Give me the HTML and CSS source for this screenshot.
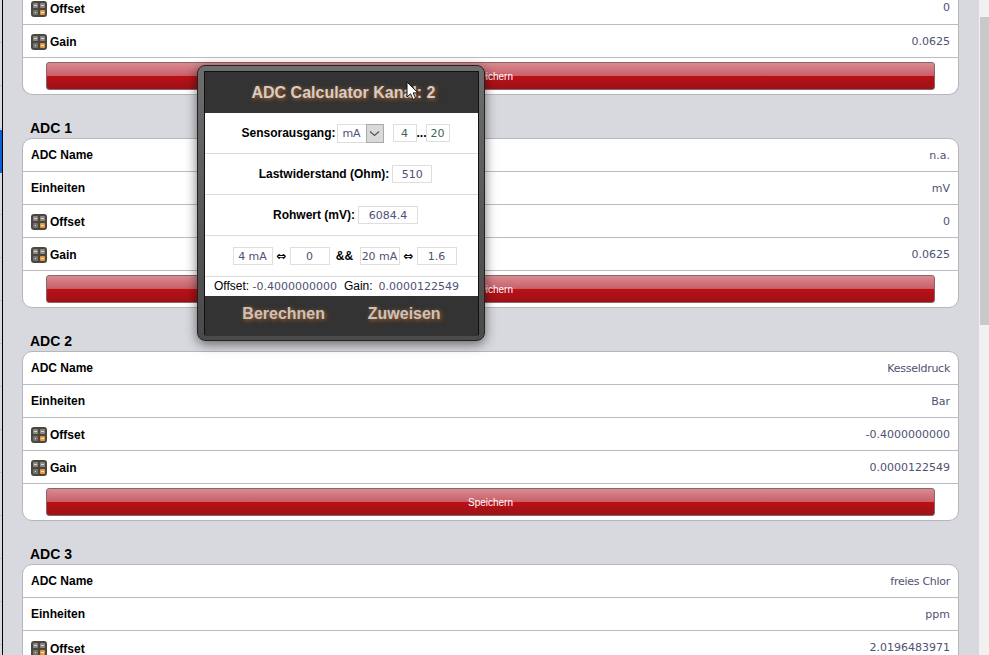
FILE: index.html
```html
<!DOCTYPE html>
<html lang="de">
<head>
    <meta charset="UTF-8">
    <title>ADC Einstellungen</title>
    <link rel="stylesheet" href="styles.css">
</head>
<body>
    <svg class="defs" width="0" height="0">
        <symbol id="calc" viewBox="0 0 16 16">
            <rect x="0" y="0" width="16" height="16" rx="3" fill="#4a4640"/>
            <rect x="2" y="2" width="5" height="5" rx="1" fill="#8c8984"/>
            <rect x="9" y="2" width="5" height="5" rx="1" fill="#8c8984"/>
            <rect x="2" y="9" width="5" height="5" rx="1" fill="#77746f"/>
            <rect x="9" y="9" width="5" height="5" rx="1" fill="#e8993a"/>
            <rect x="3" y="4" width="3" height="1" fill="#d8d6d2"/>
            <rect x="10" y="4" width="3" height="1" fill="#d8d6d2"/>
            <rect x="4" y="11" width="1" height="1" fill="#e4e2de"/>
            <rect x="10" y="11" width="3" height="1" fill="#fbe3bd"/>
        </symbol>
    </svg>

    <div class="side">
        <div class="side-tab"></div>
    </div>

    <div class="page">
        <!-- ADC 0 ist nach oben weggescrollt -->
        <section class="adc-cut">
            <div class="card card-cut">
                <div class="row row-cut"><span class="name name-ico"><svg class="ico"><use href="#calc"/></svg>Offset</span><span class="val">0</span></div>
                <div class="row"><span class="name name-ico"><svg class="ico"><use href="#calc"/></svg>Gain</span><span class="val">0.0625</span></div>
                <div class="btn-row"><button type="button" class="save">Speichern</button></div>
            </div>
        </section>

        <section class="adc">
            <h3>ADC 1</h3>
            <div class="card">
                <div class="row"><span class="name">ADC Name</span><span class="val">n.a.</span></div>
                <div class="row"><span class="name">Einheiten</span><span class="val">mV</span></div>
                <div class="row"><span class="name name-ico"><svg class="ico"><use href="#calc"/></svg>Offset</span><span class="val">0</span></div>
                <div class="row"><span class="name name-ico"><svg class="ico"><use href="#calc"/></svg>Gain</span><span class="val">0.0625</span></div>
                <div class="btn-row"><button type="button" class="save">Speichern</button></div>
            </div>
        </section>

        <section class="adc">
            <h3>ADC 2</h3>
            <div class="card">
                <div class="row"><span class="name">ADC Name</span><span class="val val-txt">Kesseldruck</span></div>
                <div class="row"><span class="name">Einheiten</span><span class="val">Bar</span></div>
                <div class="row"><span class="name name-ico"><svg class="ico"><use href="#calc"/></svg>Offset</span><span class="val">-0.4000000000</span></div>
                <div class="row"><span class="name name-ico"><svg class="ico"><use href="#calc"/></svg>Gain</span><span class="val">0.0000122549</span></div>
                <div class="btn-row"><button type="button" class="save">Speichern</button></div>
            </div>
        </section>

        <section class="adc">
            <h3>ADC 3</h3>
            <div class="card">
                <div class="row"><span class="name">ADC Name</span><span class="val val-txt">freies Chlor</span></div>
                <div class="row"><span class="name">Einheiten</span><span class="val">ppm</span></div>
                <div class="row"><span class="name name-ico"><svg class="ico"><use href="#calc"/></svg>Offset</span><span class="val">2.0196483971</span></div>
            </div>
        </section>
    </div>

    <div class="scrollbar">
        <div class="thumb"></div>
    </div>

    <!-- Popup -->
    <div class="popup">
        <div class="popup-inner">
            <div class="popup-head">ADC Calculator Kanal: 2</div>
            <div class="popup-line line-label line-sensor">
                <label>Sensorausgang:</label>
                <span class="sel"><span class="sel-text">mA</span><span class="sel-arrow"><svg width="11" height="7" viewBox="0 0 11 7"><path d="M1 1.5 5.5 5.5 10 1.5" fill="none" stroke="#555" stroke-width="1.2"/></svg></span></span>
                <input class="fld fld-s green" value="4"><b class="dots">...</b><input class="fld fld-s green" value="20">
            </div>
            <div class="popup-line line-label">
                <label>Lastwiderstand (Ohm):</label>
                <input class="fld fld-m" value="510">
            </div>
            <div class="popup-line line-label">
                <label>Rohwert (mV):</label>
                <input class="fld fld-l" value="6084.4">
            </div>
            <div class="popup-line">
                <input class="fld fld-m" value="4 mA"><b class="sym">&#8660;</b><input class="fld fld-m" value="0"><b class="amp">&amp;&amp;</b><input class="fld fld-m" value="20 mA"><b class="sym">&#8660;</b><input class="fld fld-m" value="1.6">
            </div>
            <div class="popup-result">Offset: <span class="res">-0.4000000000</span><span class="gain">Gain:</span><span class="res">0.0000122549</span></div>
            <div class="popup-foot">
                <span class="act">Berechnen</span>
                <span class="act">Zuweisen</span>
            </div>
        </div>
    </div>

    <svg class="cursor" width="14" height="21" viewBox="0 0 14 21">
        <path d="M1 1V16L4.6 12.8 7 18.5 9.6 17.4 7.2 11.9H12Z" fill="#fff" stroke="#111" stroke-width="1"/>
    </svg>
</body>
</html>
```

FILE: styles.css
```css
* {
    box-sizing: border-box;
}
html, body {
    height: 100%;
}
body {
    margin: 0;
    display: flex;
    overflow: hidden;
    font-family: "Liberation Sans", Arial, sans-serif;
    font-size: 12px;
    color: #000;
    background-color: #d8d9de;
}
.defs {
    position: absolute;
}

.side {
    flex: 0 0 3px;
    background: repeating-linear-gradient(to bottom, #d8d9de 0, #d8d9de 42px, #c2c2c8 42px, #c2c2c8 43px);
    border-right: 1px solid #000;
    padding-top: 130px;
}
.side-tab {
    height: 43px;
    background-color: #0a62d8;
}

.page {
    flex: 1;
    overflow: hidden;
    padding: 0 20px 0 19px;
}
.adc-cut {
    height: 105px;
}
.adc {
    height: 213px;
    padding-top: 15px;
}
.adc h3 {
    margin: 0 0 2px;
    padding-left: 8px;
    height: 16px;
    font-size: 14px;
    line-height: 16px;
    font-weight: bold;
}
.card {
    background-color: #fff;
    border: 1px solid #b6b6bc;
    border-radius: 10px;
}
.card-cut {
    border-top: none;
    border-top-left-radius: 0;
    border-top-right-radius: 0;
}
.row {
    display: flex;
    align-items: center;
    justify-content: space-between;
    height: 33px;
    padding: 0 8px;
    border-bottom: 1px solid #bcbcc0;
}
.row-cut {
    height: 25px;
    padding-bottom: 9px;
}
.card > .row:last-child {
    border-bottom: none;
}
.name {
    display: flex;
    align-items: center;
    font-weight: bold;
}
.name-ico {
    padding-top: 2px;
}
.ico {
    width: 16px;
    height: 16px;
    margin-right: 3px;
}
.val {
    color: #4f5272;
    font-family: "DejaVu Sans", sans-serif;
    font-size: 11px;
}
.val-txt {
    letter-spacing: -0.27px;
}
.btn-row {
    padding: 4px 23px;
    height: 36px;
}
.save {
    display: block;
    width: 100%;
    height: 28px;
    padding: 0;
    border: 1px solid #8b6468;
    border-radius: 3px;
    color: #fff;
    font-family: "Liberation Sans", Arial, sans-serif;
    font-size: 10px;
    background: linear-gradient(to bottom, #d98b91 0%, #c8606a 48%, #bd1016 50%, #ae1117 70%, #9c1216 100%);
}

.scrollbar {
    flex: 0 0 10px;
    background-color: #f1f1f1;
    padding-top: 17px;
}
.thumb {
    height: 308px;
    margin-left: 1px;
    background-color: #c9c9c9;
}

.popup {
    position: absolute;
    left: 197px;
    top: 65px;
    width: 288px;
    height: 276px;
    padding: 5px 5px 5px 6px;
    border: 1px solid #222;
    border-radius: 8px;
    background: linear-gradient(to bottom, #6e6e6e, #555 60%, #4a4a4a);
    box-shadow: 0 3px 12px rgba(0, 0, 0, 0.55);
}
.popup-inner {
    height: 100%;
    display: flex;
    flex-direction: column;
    border: 1px solid #111;
    background-color: #fff;
}
.popup-head {
    flex: 0 0 41px;
    display: flex;
    align-items: center;
    justify-content: center;
    padding-left: 4px;
    background-color: #333;
    color: #cfcfcf;
    font-size: 16px;
    font-weight: bold;
    text-shadow: 1px 1px 4px #c8661a;
}
.popup-line {
    flex: 0 0 41px;
    display: flex;
    align-items: center;
    justify-content: center;
    padding-left: 6px;
    border-bottom: 1px solid #dcdcdc;
}
.line-label {
    padding-left: 8px;
}
.popup-line label {
    font-weight: bold;
    margin-right: 3px;
}
.line-sensor label {
    margin-right: 1px;
}
.fld {
    height: 18px;
    padding: 0;
    border: 1px solid #dedede;
    background-color: #fff;
    color: #4f5272;
    font-family: "DejaVu Sans", sans-serif;
    font-size: 11px;
    text-align: center;
    outline: none;
}
.green {
    color: #3f6458;
}
.fld-s {
    width: 24px;
}
.fld-m {
    width: 40px;
}
.fld-l {
    width: 60px;
}
.dots {
    width: 9px;
    text-align: center;
}
.sym {
    width: 17px;
    text-align: center;
    font-family: "DejaVu Sans", sans-serif;
    font-size: 12px;
    font-weight: bold;
}
.amp {
    width: 30px;
    text-align: center;
}
.sel {
    display: flex;
    height: 19px;
    margin-right: 9px;
    border: 1px solid #dedede;
    color: #4f5272;
    font-family: "DejaVu Sans", sans-serif;
    font-size: 11px;
}
.sel-text {
    width: 28px;
    line-height: 17px;
    text-align: center;
}
.sel-arrow {
    display: flex;
    align-items: center;
    justify-content: center;
    width: 18px;
    background-color: #d9d9d9;
    border: 1px solid #aaa;
    margin: -1px -1px -1px 0;
}
.popup-result {
    flex: 1;
    padding-left: 9px;
    line-height: 18px;
    white-space: nowrap;
}
.res {
    color: #4f5272;
    font-family: "DejaVu Sans", sans-serif;
    font-size: 11px;
}
.gain {
    margin: 0 6px 0 7px;
}
.popup-foot {
    flex: 0 0 40px;
    display: flex;
    align-items: center;
    justify-content: space-around;
    padding: 0 16px 4px;
    background-color: #333;
}
.act {
    color: #c4c4c4;
    font-size: 16px;
    font-weight: bold;
    text-shadow: 1px 1px 4px #c8661a;
}
.cursor {
    position: absolute;
    left: 406px;
    top: 81px;
}
```
